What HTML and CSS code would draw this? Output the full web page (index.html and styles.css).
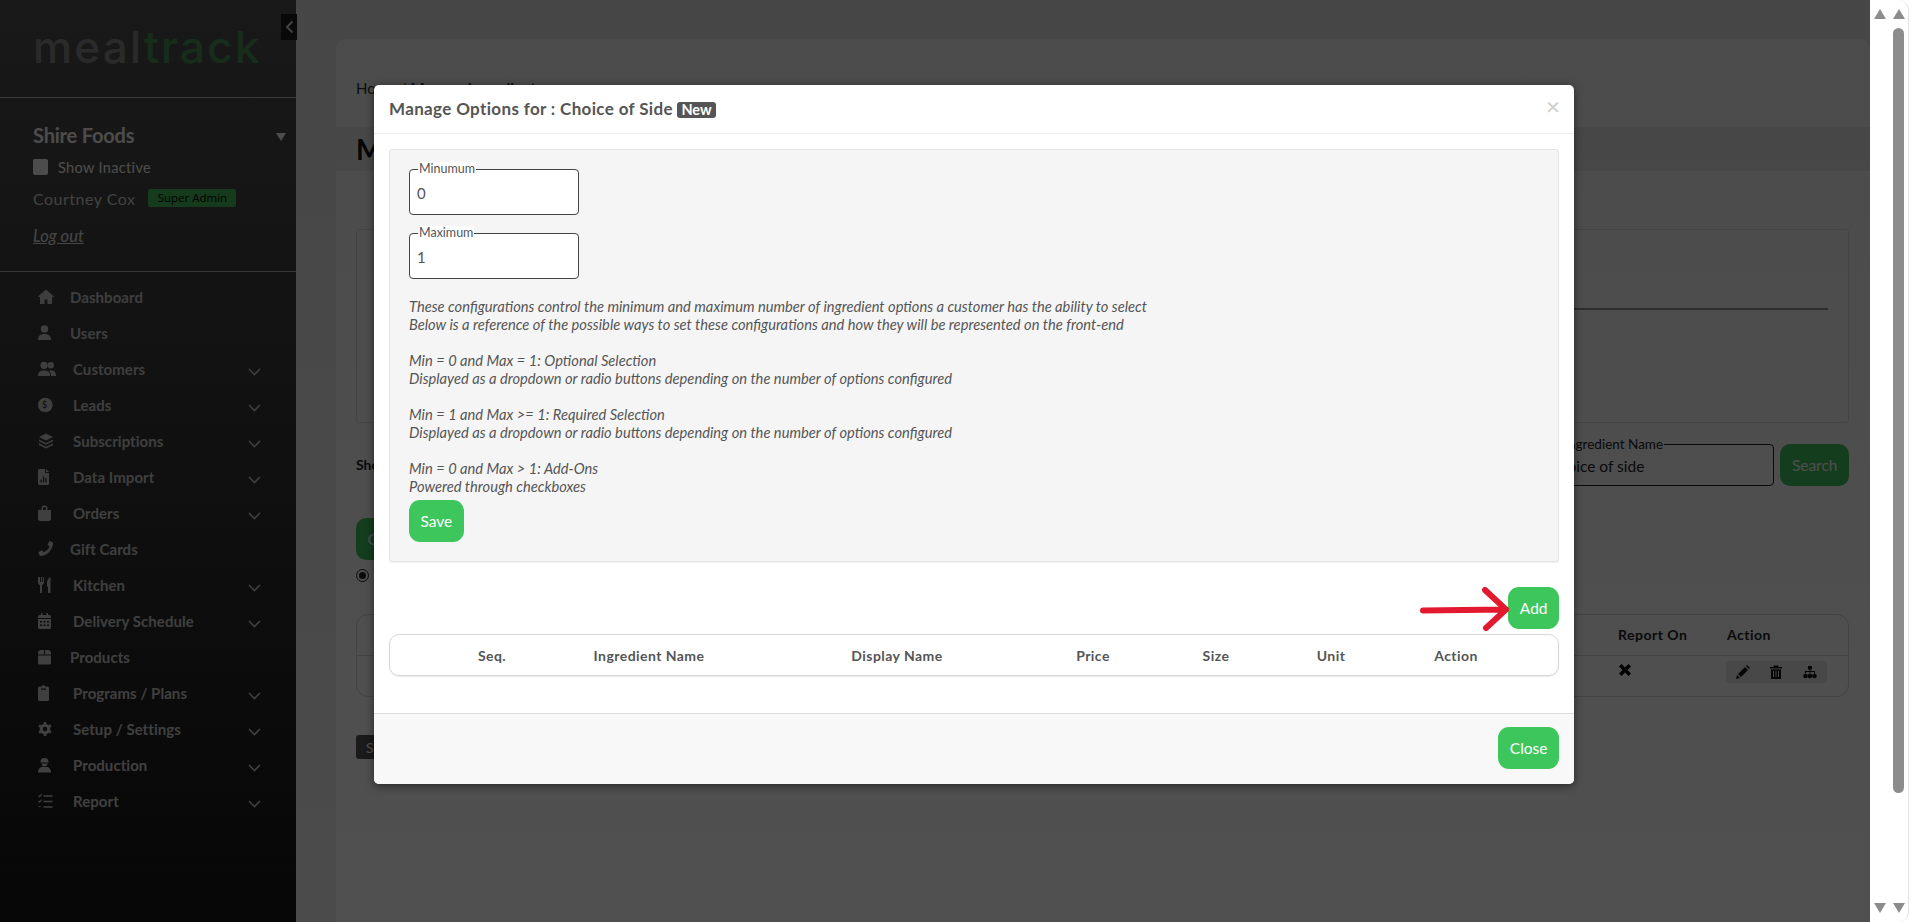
FILE: index.html
```html
<!DOCTYPE html>
<html lang="en">
<head>
<meta charset="utf-8">
<title>Manage Options</title>
<link rel="stylesheet" href="styles.css">
</head>
<body>
<svg class="defs" width="0" height="0" aria-hidden="true">
  <symbol id="i-home" viewBox="0 0 18 16"><path d="M8 .5 0 7.5 1 8.5 2 7.6V15h4.5v-4.5h3V15H14V7.6l1 .9 1-1Z"/></symbol>
  <symbol id="i-user" viewBox="0 0 18 16"><circle cx="6.5" cy="4" r="3.7"/><path d="M0 15c0-4 2-6 6.5-6S13 11 13 15Z"/></symbol>
  <symbol id="i-users" viewBox="0 0 18 16"><circle cx="6" cy="4.3" r="3.6"/><circle cx="12.8" cy="4.3" r="3.2"/><path d="M0 15c0-4 2-5.5 6-5.5s6 1.5 6 5.5Z"/><path d="M13 15h5c0-4-1.5-5.5-5-5.5-1 0-1.5.2-2 .4 1.5 1 2 3 2 5.1Z"/></symbol>
  <symbol id="i-coin" viewBox="0 0 18 16"><circle cx="7.3" cy="8" r="7.3"/></symbol>
  <symbol id="i-layers" viewBox="0 0 18 16"><path d="M8 .5 1 4 8 7.5 15 4Z"/><path d="M1 6.4 8 9.9l7-3.5v1.8L8 11.7 1 8.2Z"/><path d="M1 10.2 8 13.7l7-3.5V12L8 15.5 1 12Z"/></symbol>
  <symbol id="i-file" viewBox="0 0 18 16"><path fill-rule="evenodd" d="M0 1.5C0 .7.7 0 1.5 0H7v4h4v10.5c0 .8-.7 1.5-1.5 1.5h-8C.7 16 0 15.3 0 14.5ZM2.5 13.5h1.3v-3H2.5ZM4.9 13.5h1.3v-6H4.9ZM7.3 13.5h1.3V9H7.3Z"/><path d="M8 0l3 3H8Z"/></symbol>
  <symbol id="i-bag" viewBox="0 0 18 16"><path fill-rule="evenodd" d="M3.5 5V3.5a3 3 0 0 1 6 0V5H13v8.5a2.5 2.5 0 0 1-2.5 2.5h-8A2.5 2.5 0 0 1 0 13.5V5ZM5 5h3V3.5a1.5 1.5 0 0 0-3 0Z"/></symbol>
  <symbol id="i-phone" viewBox="0 0 18 16"><path d="M15 1.5 11.5 0 9.5 3.8l2 1.7a10 10 0 0 1-5.8 5.8L4 9.3.3 11.3 1.8 15C9 15 15 9 15 1.5Z"/></symbol>
  <symbol id="i-fork" viewBox="0 0 18 16"><path d="M0 0v5c0 1.6.9 2.7 2 3.1V16h2V8.1C5.1 7.7 6 6.6 6 5V0H5v5H4V0H3v5H2V0Z"/><path d="M10 16h2.5V0C10.8.8 9 3 9 6v3.5h1Z"/></symbol>
  <symbol id="i-cal" viewBox="0 0 18 16"><path fill-rule="evenodd" d="M3 0h1.5v2h4V0H10v2h1.5A1.5 1.5 0 0 1 13 3.5V5H0V3.5A1.5 1.5 0 0 1 1.5 2H3ZM0 6h13v8.5a1.5 1.5 0 0 1-1.5 1.5h-10A1.5 1.5 0 0 1 0 14.5ZM2 8v1.5h2V8ZM5.5 8v1.5h2V8ZM9 8v1.5h2V8ZM2 11.5V13h2v-1.5ZM5.5 11.5V13h2v-1.5ZM9 11.5V13h2v-1.5Z"/></symbol>
  <symbol id="i-box" viewBox="0 0 18 16"><path d="M2 1h4v4.5H0V3ZM7 1h4l2 2v2.5H7ZM0 6.5h13V14a1.5 1.5 0 0 1-1.5 1.5h-10A1.5 1.5 0 0 1 0 14Z"/></symbol>
  <symbol id="i-clip" viewBox="0 0 18 16"><path fill-rule="evenodd" d="M4 1.5a1.5 1.5 0 0 1 3 0h2.5A1.5 1.5 0 0 1 11 3v11.5A1.5 1.5 0 0 1 9.5 16h-8A1.5 1.5 0 0 1 0 14.5V3a1.5 1.5 0 0 1 1.5-1.5ZM3 3.5v1.2h5V3.5Z"/></symbol>
  <symbol id="i-cog" viewBox="0 0 18 16"><circle cx="7" cy="8" r="3.8" fill="none" stroke="currentColor" stroke-width="3"/><path fill="none" stroke="currentColor" stroke-width="2.6" d="M7 1v2M7 13v2M1 4.5l1.800 1M11.200 10.500l1.800 1M1 11.500l1.800-1M11.200 5.500l1.800-1"/></symbol>
  <symbol id="i-hat" viewBox="0 0 18 16"><path d="M2.500 5a4 4 0 0 1 8 0v.6h-8Z"/><path d="M3.500 6.600h6a3 3 0 0 1-6 0Z"/><path d="M0 15.500C0 12 2 10 4.500 10h4c2.500 0 4.500 2 4.500 5.500Z"/></symbol>
  <symbol id="i-tasks" viewBox="0 0 18 16"><path fill="none" stroke="currentColor" stroke-width="1.500" d="M5.500 3H14.500M5.500 8.500H14.500M5.500 14H14.500"/><path fill="none" stroke="currentColor" stroke-width="1.200" d="M.5 2.500l1.200 1.200L3.700 1M.5 8l1.200 1.200L3.700 6.500M.8 13.500h1.800"/></symbol>
  <symbol id="i-chev" viewBox="0 0 13 8"><path fill="none" stroke="currentColor" stroke-width="1.600" d="M1 1l5.500 5.500L12 1"/></symbol>
</svg>

<div class="screen">
  <div class="frame">
    <aside class="sidebar">
      <div class="brand"><span class="brand-meal">meal</span><span class="brand-track">track</span></div>
      <button class="collapse" aria-label="Collapse"><svg width="9" height="14" viewBox="0 0 9 14"><path fill="none" stroke="currentColor" stroke-width="2" d="M7.500 1.500 2 7l5.500 5.500"/></svg></button>
      <div class="account">
        <div class="org"><span class="org-name">Shire Foods</span><span class="org-caret"></span></div>
        <label class="inactive"><span class="check"></span>Show Inactive</label>
        <div class="who"><span class="who-name">Courtney Cox</span><span class="role">Super Admin</span></div>
        <a class="logout">Log out</a>
      </div>
      <nav class="menu">
        <a class="item"><svg class="ico"><use href="#i-home"/></svg><span class="lbl">Dashboard</span></a>
        <a class="item"><svg class="ico"><use href="#i-user"/></svg><span class="lbl">Users</span></a>
        <a class="item sub"><svg class="ico"><use href="#i-users"/></svg><span class="lbl">Customers</span><svg class="chev"><use href="#i-chev"/></svg></a>
        <a class="item sub"><span class="coin"><svg class="ico"><use href="#i-coin"/></svg><span class="coin-s">$</span></span><span class="lbl">Leads</span><svg class="chev"><use href="#i-chev"/></svg></a>
        <a class="item sub"><svg class="ico"><use href="#i-layers"/></svg><span class="lbl">Subscriptions</span><svg class="chev"><use href="#i-chev"/></svg></a>
        <a class="item sub"><svg class="ico"><use href="#i-file"/></svg><span class="lbl">Data Import</span><svg class="chev"><use href="#i-chev"/></svg></a>
        <a class="item sub"><svg class="ico"><use href="#i-bag"/></svg><span class="lbl">Orders</span><svg class="chev"><use href="#i-chev"/></svg></a>
        <a class="item"><svg class="ico"><use href="#i-phone"/></svg><span class="lbl">Gift Cards</span></a>
        <a class="item sub"><svg class="ico"><use href="#i-fork"/></svg><span class="lbl">Kitchen</span><svg class="chev"><use href="#i-chev"/></svg></a>
        <a class="item sub"><svg class="ico"><use href="#i-cal"/></svg><span class="lbl">Delivery Schedule</span><svg class="chev"><use href="#i-chev"/></svg></a>
        <a class="item"><svg class="ico"><use href="#i-box"/></svg><span class="lbl">Products</span></a>
        <a class="item sub"><svg class="ico"><use href="#i-clip"/></svg><span class="lbl">Programs / Plans</span><svg class="chev"><use href="#i-chev"/></svg></a>
        <a class="item sub"><svg class="ico"><use href="#i-cog"/></svg><span class="lbl">Setup / Settings</span><svg class="chev"><use href="#i-chev"/></svg></a>
        <a class="item sub"><svg class="ico"><use href="#i-hat"/></svg><span class="lbl">Production</span><svg class="chev"><use href="#i-chev"/></svg></a>
        <a class="item sub"><svg class="ico"><use href="#i-tasks"/></svg><span class="lbl">Report</span><svg class="chev"><use href="#i-chev"/></svg></a>
      </nav>
    </aside>

    <main class="main">
      <section class="card">
        <div class="crumbs">Home / <b>Manage Ingredients</b></div>
        <h1 class="band">Manage Ingredients</h1>
        <div class="content">
          <div class="filter"><div class="filter-rule"></div></div>
          <div class="search-row">
            <span class="show">Show</span>
            <div class="search-right">
              <div class="bg-field"><span class="bg-legend">Ingredient Name</span>Choice of side</div>
              <button class="bg-btn">Search</button>
            </div>
          </div>
          <button class="bg-btn bg-create">Create</button>
          <div class="radio"><span class="radio-dot"></span></div>
          <div class="bg-table">
            <div class="bg-head"><span class="col-tail">Status</span><span class="col-report">Report On</span><span class="col-action">Action</span></div>
            <div class="bg-row">
              <span class="col-report"><svg class="x-ico" viewBox="0 0 12 12"><path d="M2.500 0 6 3.500 9.500 0 12 2.500 8.500 6 12 9.500 9.500 12 6 8.500 2.500 12 0 9.500 3.500 6 0 2.500Z"/></svg></span>
              <span class="col-action"><span class="act-group">
                <svg class="act" viewBox="0 0 14 14"><path d="M0 14l1-4 3 3ZM2 9l7-7 3 3-7 7ZM10 1l1-1 3 3-1 1Z"/></svg>
                <svg class="act" viewBox="0 0 14 14"><path fill-rule="evenodd" d="M1 2h3.500V.5h5V2H13v1.500H1ZM2 4.500h10V14H2ZM4 6v6h1V6ZM6.500 6v6h1V6ZM9 6v6h1V6Z"/></svg>
                <svg class="act" viewBox="0 0 14 14"><path d="M5 1h4v3.500H7.500V6H12v2.500h-1V7H7.500v1.500h-1V7H3v1.500H2V6h4.500V4.500H5Z"/><circle cx="2.500" cy="11" r="2.300"/><circle cx="7" cy="11" r="2.300"/><circle cx="11.500" cy="11" r="2.300"/></svg>
              </span></span>
            </div>
          </div>
          <button class="bg-dark">Show</button>
        </div>
      </section>
    </main>

    <div class="backdrop"></div>

    <div class="modal" role="dialog">
      <header class="m-head">
        <h2 class="m-title">Manage Options for : Choice of Side <span class="m-new">New</span></h2>
        <span class="m-x">×</span>
      </header>
      <div class="m-body">
        <div class="panel">
          <div class="field"><span class="legend">Minumum</span><input class="num" value="0"></div>
          <div class="field"><span class="legend">Maximum</span><input class="num" value="1"></div>
          <p class="help">These configurations control the minimum and maximum number of ingredient options a customer has the ability to select<br>
Below is a reference of the possible ways to set these configurations and how they will be represented on the front-end<br><br>
Min = 0 and Max = 1: Optional Selection<br>
Displayed as a dropdown or radio buttons depending on the number of options configured<br><br>
Min = 1 and Max &gt;= 1: Required Selection<br>
Displayed as a dropdown or radio buttons depending on the number of options configured<br><br>
Min = 0 and Max &gt; 1: Add-Ons<br>
Powered through checkboxes</p>
          <button class="btn">Save</button>
        </div>
        <div class="add-row"><button class="btn">Add</button></div>
        <div class="m-table">
          <span></span><span>Seq.</span><span>Ingredient Name</span><span>Display Name</span><span>Price</span><span>Size</span><span>Unit</span><span>Action</span>
        </div>
      </div>
      <footer class="m-foot"><button class="btn">Close</button></footer>
      <svg class="arrow" width="90" height="44" viewBox="0 0 90 44"><path fill="none" stroke="#e31a2f" stroke-width="6" stroke-linecap="round" stroke-linejoin="round" d="M3 23.500 85 22.500M65 3l21 19.500L66 41"/></svg>
    </div>
  </div>

  <div class="rail">
    <div class="bar"><span class="tri up"></span><span class="tri down"></span></div>
    <div class="bar bar-thumb"><span class="tri up"></span><span class="thumb"></span><span class="tri down"></span></div>
  </div>
</div>
</body>
</html>
```

FILE: styles.css
```css
* { box-sizing: border-box; }
html, body { margin: 0; height: 100%; overflow: hidden; background: #fff; }
body { font-family: Lato, "Liberation Sans", sans-serif; }
.defs { position: absolute; }
button { font-family: inherit; border: 0; }

.screen { display: flex; width: 1913px; height: 922px; }
.frame { position: relative; display: flex; flex: 0 0 1870px; height: 922px; overflow: hidden; background: #efefef; }

/* sidebar */
.sidebar { position: relative; flex: 0 0 296px; color: #e4e4e4; background: linear-gradient(#545454, #141414); }
.brand { height: 98px; padding: 17px 0 0 33px; font: 500 44px/60px Inter, sans-serif; letter-spacing: 2.2px; border-bottom: 1px solid #bbb; }
.brand-meal { color: #8f8f8f; }
.brand-track { color: #4d9a5c; }
.collapse { position: absolute; top: 14px; left: 281px; width: 16px; height: 26px; padding: 0; display: flex; align-items: center; justify-content: center; background: #1c1c1c; color: #ddd; }
.account { height: 174px; padding: 24px 0 0 33px; border-bottom: 1px solid #bbb; }
.org { display: flex; align-items: center; height: 26px; font-size: 20px; font-weight: 700; color: #fff; }
.org-name { flex: 1; letter-spacing: -.2px; }
.org-caret { margin: 3px 10px 0 0; border: 5px solid transparent; border-top: 8px solid #fff; border-bottom: 0; }
.inactive { display: flex; align-items: center; height: 18px; margin-top: 10px; font-size: 14.500px; letter-spacing: .35px; color: #fff; }
.check { width: 15px; height: 16px; margin-right: 10px; border-radius: 2px; background: #fff; }
.who { display: flex; align-items: center; height: 22px; margin-top: 11px; }
.who-name { font-size: 16px; letter-spacing: .5px; color: #dcdcdc; }
.role { margin-left: 13px; width: 88px; height: 18px; border-radius: 2px; background: #48c25f; color: #000; font: 11.500px/18px "Open Sans", sans-serif; text-align: center; }
.logout { display: block; margin-top: 17px; font-size: 16.500px; font-style: italic; text-decoration: underline; color: #e6e6e6; }
.menu { padding-top: 7px; }
.item { display: flex; align-items: center; height: 36px; padding: 0 35px 0 38px; color: #cdcdcd; font-size: 15px; font-weight: 700; letter-spacing: .05px; }
.ico { flex: 0 0 18px; width: 18px; height: 16px; margin-right: 14px; fill: currentColor; }
.sub .lbl { margin-left: 3px; }
.lbl { flex: 1; }
.chev { width: 13px; height: 8px; margin-top: 6px; }
.coin { position: relative; display: flex; }
.coin-s { position: absolute; left: 4px; top: 1px; font-size: 9px; line-height: 14px; color: #222; font-weight: 400; }

/* page behind */
.main { flex: 1; min-width: 0; }
.card { height: 883px; margin: 39px 0 0 40px; background: #fff; border-radius: 10px 10px 0 0; }
.crumbs { height: 88px; padding: 39px 20px 0; font-size: 15px; line-height: 20px; color: #333; }
.band { height: 44px; margin: 0; padding: 0 20px; background: #f0f0f0; font-size: 28px; line-height: 44px; color: #111; }
.content { padding: 58px 21px 0 20px; }
.filter { height: 194px; padding: 78px 20px 0; border: 1px solid #e2e2e2; border-radius: 3px; }
.filter-rule { height: 2px; background: #999; }
.search-row { display: flex; justify-content: space-between; height: 42px; margin-top: 21px; }
.show { font-size: 14px; font-weight: 700; line-height: 42px; color: #222; }
.search-right { display: flex; gap: 6px; }
.bg-field { position: relative; width: 233px; padding-left: 6px; border: 1px solid #222; border-radius: 4px; font-size: 15.500px; line-height: 42px; color: #222; }
.bg-legend { position: absolute; left: 22px; top: -10px; padding-right: 1px; font-size: 13.500px; line-height: 18px; background: #fff; }
.bg-btn { display: block; height: 42px; padding: 0 11.500px; border-radius: 10px; background: #40c861; color: #fff; font-size: 15.500px; }
.bg-create { margin-top: 32px; }
.radio { display: flex; align-items: center; justify-content: center; width: 13px; height: 13px; margin: 9px 0 32px; border: 1px solid #222; border-radius: 50%; }
.radio-dot { width: 7px; height: 7px; border-radius: 50%; background: #222; }
.bg-table { height: 83px; border: 1px solid #d8d8d8; border-radius: 12px; }
.bg-head, .bg-row { display: flex; justify-content: flex-end; padding-right: 21px; font-size: 14px; font-weight: 700; letter-spacing: .5px; color: #222; }
.bg-head { height: 41px; line-height: 40px; border-bottom: 1px solid #d8d8d8; }
.bg-head .col-report, .bg-head .col-action { padding-left: 1px; }
.col-tail { width: 60px; margin-right: 40px; }
.col-report { width: 109px; }
.col-action { width: 101px; }
.x-ico { display: block; width: 12px; height: 12px; margin: 8px 0 0 2px; fill: #000; }
.act-group { display: flex; align-items: center; justify-content: space-around; width: 101px; height: 22px; margin-top: 5px; border-radius: 4px; background: #e8e8e8; }
.act { width: 14px; height: 14px; fill: #111; }
.bg-dark { display: block; height: 24px; margin-top: 38px; padding: 0 10px; border-radius: 3px; background: #555; color: #fff; font-size: 14px; }

.backdrop { position: absolute; inset: 0; background: linear-gradient(rgba(0, 0, 0, .705), rgba(0, 0, 0, .685)); }

/* modal */
.modal { position: absolute; left: 374px; top: 85px; width: 1200px; height: 699px; display: flex; flex-direction: column; background: #fff; border-radius: 5px; box-shadow: 0 2px 8px rgba(0, 0, 0, .5); color: #555; }
.m-head { display: flex; align-items: center; justify-content: space-between; flex: 0 0 49px; padding: 0 15px; border-bottom: 1px solid #eee; }
.m-title { margin: -2px 0 0; font-size: 17px; font-weight: 700; letter-spacing: .35px; color: #555; }
.m-new { display: inline-block; height: 16px; padding: 0 4px; border-radius: 3px; background: #555; color: #fff; font-size: 14.500px; line-height: 16px; vertical-align: 0; letter-spacing: 0; }
.m-x { margin: -6px -1px 0 0; font-size: 24px; line-height: 24px; color: #ccc; }
.m-body { flex: 1; padding: 15px 15px 0; }
.panel { height: 413px; padding: 19px; background: #f5f5f5; border: 1px solid #e4e4e4; border-radius: 3px; box-shadow: 0 1px 1px rgba(0, 0, 0, .06); }
.field { position: relative; width: 170px; height: 46px; margin-bottom: 18px; }
.legend { position: absolute; left: 9px; top: -7px; padding: 0 1px; font-size: 12.500px; line-height: 14px; background: #fff; color: #555; }
.num { display: block; width: 100%; height: 46px; padding: 1px 7px 0 7px; border: 1px solid #444; border-radius: 4px; background: #fff; font: 15px Lato, sans-serif; color: #555; outline: 0; }
.help { margin: 0 0 5px; font-size: 14.700px; font-style: italic; line-height: 18px; color: #555; }
.btn { display: block; height: 42px; padding: 0 11.500px; border-radius: 11px; background: #3cc65c; color: #fff; font-size: 15.500px; }
.add-row { display: flex; justify-content: flex-end; margin-top: 25px; }
.m-table { display: grid; grid-template-columns: 40px 124px 190px 306px 86px 160px 70px 180px; align-items: center; height: 42px; margin-top: 5px; border: 1px solid #d6d6d6; border-radius: 10px; box-shadow: 0 1px 1px rgba(0, 0, 0, .08); font-size: 14px; font-weight: 700; letter-spacing: .45px; text-align: center; color: #555; }
.m-foot { display: flex; justify-content: flex-end; flex: 0 0 71px; padding: 13px 15px; background: #f8f8f8; border-top: 1px solid #ddd; border-radius: 0 0 5px 5px; }
.arrow { position: absolute; left: 1046px; top: 502px; }

/* page scrollbars */
.rail { display: flex; flex: 0 0 43px; padding-right: 4px; }
.bar { display: flex; flex-direction: column; align-items: center; width: 19px; padding: 9px 0; }
.bar-thumb { border-right: 1px solid #e2e2e2; border-radius: 0 10px 10px 0; width: 20px; }
.tri { flex: none; width: 0; height: 0; border-left: 6.500px solid transparent; border-right: 6.500px solid transparent; }
.up { border-bottom: 10px solid #8c8c8c; }
.down { margin-top: auto; border-top: 10px solid #8c8c8c; }
.thumb { flex: none; width: 11px; height: 765px; margin-top: 9px; border-radius: 6px; background: #8c8c8c; }
```
